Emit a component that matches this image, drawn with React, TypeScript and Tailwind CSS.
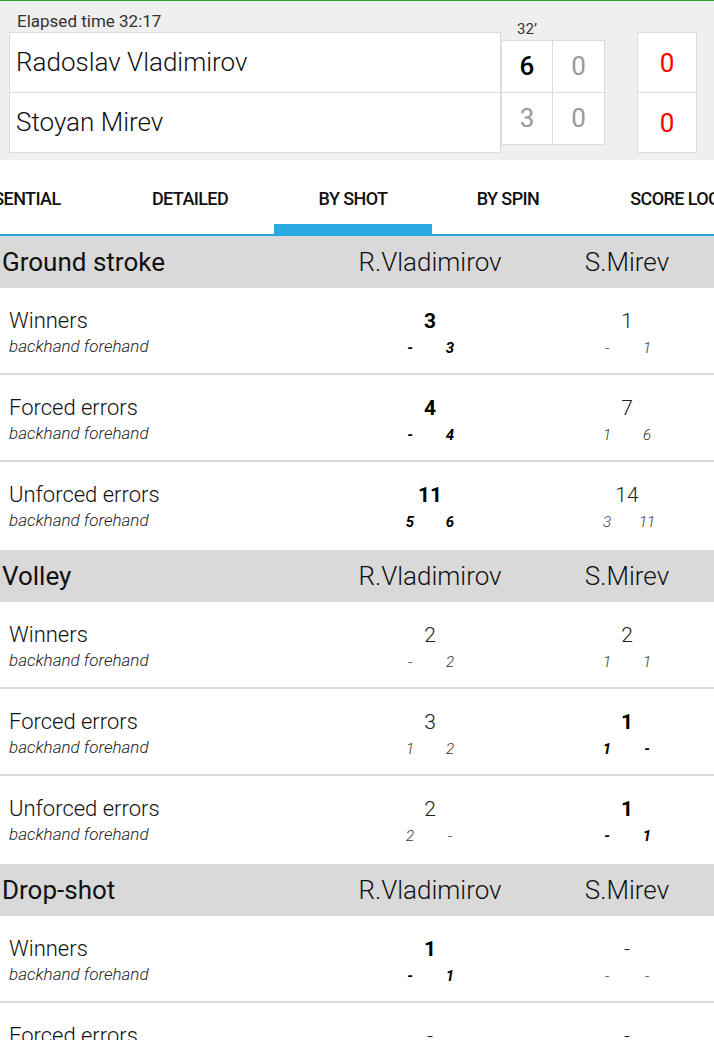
import React from "react"

type Stat = {
  label: string
  a: string
  aSub: [string, string]
  b: string
  bSub: [string, string]
  bold?: "a" | "b"
}

type Section = {
  title: string
  rows: Stat[]
}

const sections: Section[] = [
  {
    title: "Ground stroke",
    rows: [
      { label: "Winners", a: "3", aSub: ["-", "3"], b: "1", bSub: ["-", "1"], bold: "a" },
      { label: "Forced errors", a: "4", aSub: ["-", "4"], b: "7", bSub: ["1", "6"], bold: "a" },
      { label: "Unforced errors", a: "11", aSub: ["5", "6"], b: "14", bSub: ["3", "11"], bold: "a" },
    ],
  },
  {
    title: "Volley",
    rows: [
      { label: "Winners", a: "2", aSub: ["-", "2"], b: "2", bSub: ["1", "1"] },
      { label: "Forced errors", a: "3", aSub: ["1", "2"], b: "1", bSub: ["1", "-"], bold: "b" },
      { label: "Unforced errors", a: "2", aSub: ["2", "-"], b: "1", bSub: ["-", "1"], bold: "b" },
    ],
  },
  {
    title: "Drop-shot",
    rows: [
      { label: "Winners", a: "1", aSub: ["-", "1"], b: "-", bSub: ["-", "-"], bold: "a" },
      { label: "Forced errors", a: "-", aSub: ["-", "-"], b: "-", bSub: ["-", "-"] },
    ],
  },
]

// tab widths follow the label width, like the android tab strip
const tabs = [
  { label: "ESSENTIAL", w: "w-[178px]", active: false },
  { label: "DETAILED", w: "w-[168px]", active: false },
  { label: "BY SHOT", w: "w-[158px]", active: true },
  { label: "BY SPIN", w: "w-[152px]", active: false },
  { label: "SCORE LOG", w: "w-[182px]", active: false },
]

function ValueCell({ main, sub, bold, width }: { main: string; sub: [string, string]; bold: boolean; width: string }) {
  const subCls = `w-[40px] text-center italic text-[15px] leading-[20px] ${bold ? "font-bold text-black" : "font-light text-[#333]"}`
  return (
    <div className={`${width} flex flex-col items-center`}>
      <span className={`text-[21px] leading-[28px] ${bold ? "font-bold text-black" : "font-light text-[#222]"}`}>{main}</span>
      <div className="flex mt-[3px]">
        <span className={subCls}>{sub[0]}</span>
        <span className={subCls}>{sub[1]}</span>
      </div>
    </div>
  )
}

function StatRow({ row, last }: { row: Stat; last: boolean }) {
  return (
    <div className={`flex items-start pt-[19px] ${last ? "h-[88px]" : "h-[87px] border-b-2 border-[#d9d9d9]"}`}>
      <div className="flex-1 pl-[9px] flex flex-col">
        <span className="text-[22px] leading-[28px] font-light text-[#111]">{row.label}</span>
        <span className="mt-[1px] text-[17px] leading-[20px] italic font-light text-[#222]">backhand forehand</span>
      </div>
      <ValueCell main={row.a} sub={row.aSub} bold={row.bold === "a"} width="w-[180px]" />
      <div className="w-[27px]" />
      <ValueCell main={row.b} sub={row.bSub} bold={row.bold === "b"} width="w-[160px]" />
      <div className="w-[7px]" />
    </div>
  )
}

function ScoreHeader() {
  return (
    <div className="bg-[#efefef] border-t border-[#2aa52a] h-[160px] relative">
      <div className="pl-[17px] pt-[10px] text-[17px] leading-[20px] text-[#333]">Elapsed time 32:17</div>
      <div className="flex pl-[9px] mt-[1px]">
        <div className="w-[492px] flex flex-col">
          <div className="h-[61px] bg-white border border-[#dcdcdc] flex items-center pl-[6px] text-[26px] font-light text-[#111]">Radoslav Vladimirov</div>
          <div className="h-[60px] bg-white border border-[#dcdcdc] border-t-0 flex items-center pl-[6px] text-[26px] font-light text-[#111]">Stoyan Mirev</div>
        </div>
        <div className="flex flex-col mt-[8px]">
          <div className="flex">
            <div className="w-[52px] h-[53px] bg-white border border-[#dcdcdc] flex items-center justify-center text-[26px] font-medium text-black">6</div>
            <div className="w-[52px] h-[53px] bg-white border border-[#dcdcdc] border-l-0 flex items-center justify-center text-[26px] text-[#999]">0</div>
          </div>
          <div className="flex">
            <div className="w-[52px] h-[52px] bg-white border border-[#dcdcdc] border-t-0 flex items-center justify-center text-[26px] text-[#999]">3</div>
            <div className="w-[52px] h-[52px] bg-white border border-[#dcdcdc] border-l-0 border-t-0 flex items-center justify-center text-[26px] text-[#999]">0</div>
          </div>
        </div>
        <div className="ml-[32px] flex flex-col">
          <div className="w-[60px] h-[61px] bg-white border border-[#dcdcdc] flex items-center justify-center pt-[2px] text-[26px] text-[#ff0000]">0</div>
          <div className="w-[60px] h-[60px] bg-white border border-[#dcdcdc] border-t-0 flex items-center justify-center pt-[2px] text-[26px] text-[#ff0000]">0</div>
        </div>
      </div>
      <div className="absolute left-[501px] top-[18px] w-[52px] text-center text-[15px] leading-[20px] text-[#333]">32’</div>
    </div>
  )
}

function Tabs() {
  return (
    <div className="bg-white h-[76px] border-b-2 border-[#29a9e1] overflow-hidden">
      <div className="flex h-full -ml-[72px]">
        {tabs.map((t) => (
          <div key={t.label} className={`${t.w} shrink-0 h-full flex flex-col items-center`}>
            <div className="flex-1 flex items-center justify-center pt-[12px] text-[18px] font-medium tracking-[-0.6px] text-[#111] whitespace-nowrap">
              {t.label}
            </div>
            <div className={`w-full h-[10px] ${t.active ? "bg-[#29a9e1]" : ""}`} />
          </div>
        ))}
      </div>
    </div>
  )
}

export default function App() {
  return (
    <div className="w-[714px] h-[1040px] overflow-hidden bg-white" style={{ fontFamily: "Roboto, 'Noto Sans', sans-serif" }}>
      <ScoreHeader />
      <Tabs />
      {sections.map((s) => (
        <div key={s.title}>
          <div className="flex items-center h-[52px] bg-[#d9d9d9]">
            <div className="flex-1 pl-[2px] text-[26px] font-normal text-[#111]">{s.title}</div>
            <div className="w-[180px] text-center text-[26px] font-light text-[#111]">R.Vladimirov</div>
            <div className="w-[27px]" />
            <div className="w-[160px] text-center text-[26px] font-light text-[#111]">S.Mirev</div>
            <div className="w-[7px]" />
          </div>
          {s.rows.map((r, i) => (
            <StatRow key={s.title + r.label} row={r} last={i === s.rows.length - 1} />
          ))}
        </div>
      ))}
    </div>
  )
}
